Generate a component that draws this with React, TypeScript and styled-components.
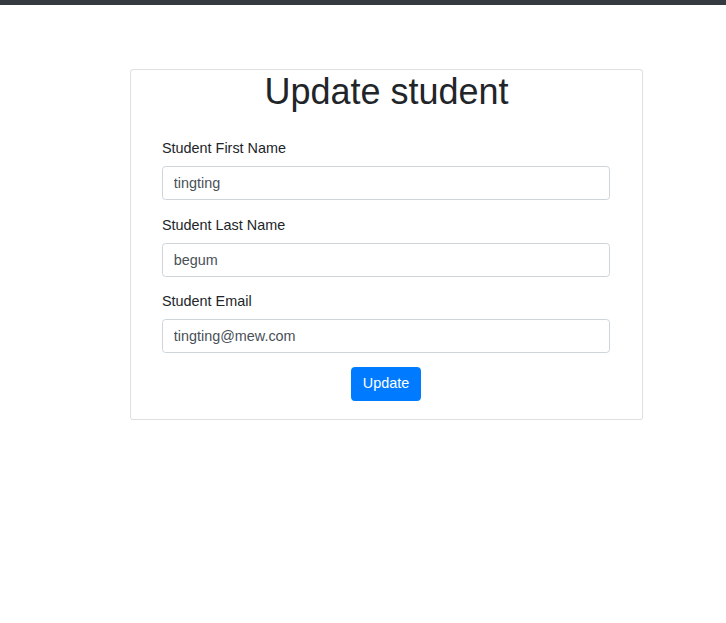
import styled, { createGlobalStyle } from 'styled-components'

const GlobalStyle = createGlobalStyle`
  html, body {
    margin: 0;
    padding: 0;
    background: #fff;
  }
  body {
    font-family: 'Liberation Sans', Arial, sans-serif;
    font-size: 14.4px;
    color: #212529;
  }
  * {
    box-sizing: border-box;
  }
`

const TopBar = styled.div`
  height: 5px;
  background-color: #343a40;
`
const Page = styled.main`
  padding: 64px 0 0 130px;
`
const Card = styled.section`
  width: 513px;
  border: 1px solid rgba(0,0,0,0.125);
  border-radius: 3.6px;
  background-color: #fff;
`
const Title = styled.h1`
  margin: 0;
  font-size: 36px;
  font-weight: 400;
  line-height: 1.2;
  text-align: center;
  color: #212529;
`
const Form = styled.form`
  padding: 25px 32px 18.5px 31px;
`
const Group = styled.div`
  margin-bottom: 14.5px;
`
const Label = styled.label`
  display: block;
  margin-bottom: 6.5px;
  font-size: 14.4px;
  line-height: 21.6px;
  color: #212529;
`
const Input = styled.input`
  display: block;
  width: 100%;
  height: 34px;
  padding: 5.4px 10.8px;
  font-family: 'Liberation Sans', Arial, sans-serif;
  font-size: 14.4px;
  line-height: 1.5;
  color: #495057;
  background-color: #fff;
  border: 1px solid #ced4da;
  border-radius: 3.6px;
  &:focus {
    outline: none;
  }
`
const Actions = styled.div`
  display: flex;
  justify-content: center;
  margin-top: -1px;
`
const Button = styled.button`
  height: 34px;
  padding: 0 10.8px;
  font-family: 'Liberation Sans', Arial, sans-serif;
  font-size: 14.4px;
  line-height: 1.5;
  color: #fff;
  background-color: #007bff;
  border: 1px solid #007bff;
  border-radius: 3.6px;
  cursor: pointer;
`

const fields = [
  { id: 'firstName', label: 'Student First Name', value: 'tingting' },
  { id: 'lastName', label: 'Student Last Name', value: 'begum' },
  { id: 'email', label: 'Student Email', value: 'tingting@mew.com' },
]

const App = () => {
  return (
    <>
      <GlobalStyle />
      <TopBar />
      <Page>
        <Card>
          <Title>Update student</Title>
          <Form onSubmit={(e) => e.preventDefault()}>
            {fields.map((f) => (
              <Group key={f.id}>
                <Label htmlFor={f.id}>{f.label}</Label>
                <Input id={f.id} defaultValue={f.value} />
              </Group>
            ))}
            <Actions>
              <Button type="submit">Update</Button>
            </Actions>
          </Form>
        </Card>
      </Page>
    </>
  )
}

export default App
